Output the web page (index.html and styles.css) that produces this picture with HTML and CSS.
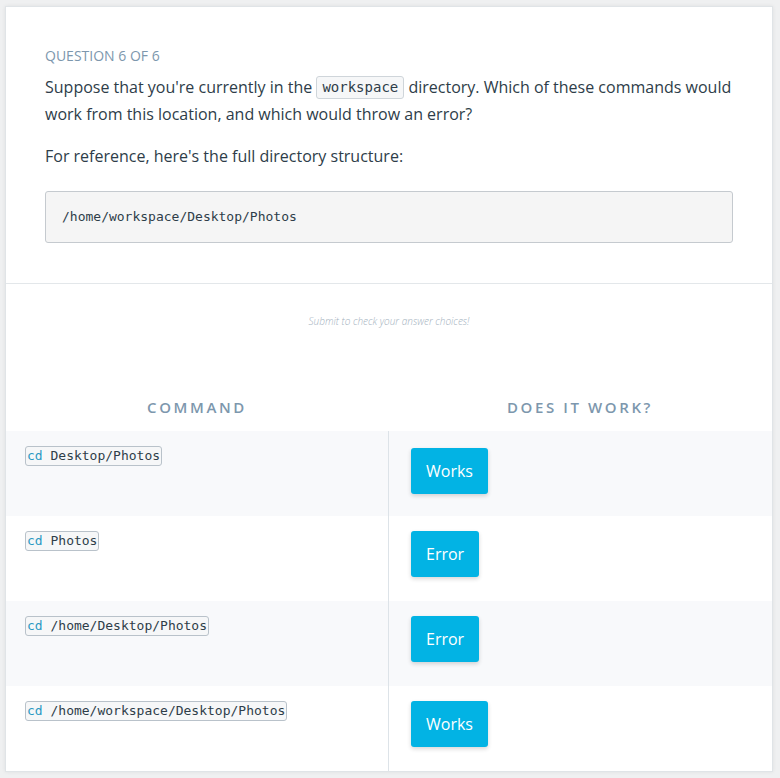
FILE: index.html
```html
<!DOCTYPE html>
<html>
<head>
<meta charset="utf-8">
<link rel="stylesheet" href="styles.css">
</head>
<body>
<div class="card">
  <section class="intro">
    <div class="label">Question 6 of 6</div>
    <p class="text">Suppose that you're currently in the <code class="inline">workspace</code> directory. Which of these commands would work from this location, and which would throw an error?</p>
    <p class="text">For reference, here's the full directory structure:</p>
    <pre class="block">/home/workspace/Desktop/Photos</pre>
  </section>
  <section class="results">
    <div class="hint">Submit to check your answer choices!</div>
    <div class="table">
      <div class="head">Command</div>
      <div class="head">Does it work?</div>

      <div class="cell cmd shade"><code class="tcode"><span class="kw">cd</span> Desktop/Photos</code></div>
      <div class="cell ans shade first"><button class="btn">Works</button></div>

      <div class="cell cmd"><code class="tcode"><span class="kw">cd</span> Photos</code></div>
      <div class="cell ans"><button class="btn">Error</button></div>

      <div class="cell cmd shade"><code class="tcode"><span class="kw">cd</span> /home/Desktop/Photos</code></div>
      <div class="cell ans shade"><button class="btn">Error</button></div>

      <div class="cell cmd"><code class="tcode"><span class="kw">cd</span> /home/workspace/Desktop/Photos</code></div>
      <div class="cell ans"><button class="btn">Works</button></div>
    </div>
  </section>
</div>
</body>
</html>
```
FILE: styles.css
```css
* { box-sizing: border-box; }
html, body { margin: 0; padding: 0; }
body {
  background: #eff0f1;
  font-family: "Open Sans", "Liberation Sans", sans-serif;
  color: #2e3d49;
  width: 780px;
  height: 778px;
  overflow: hidden;
}
.card {
  margin: 6px 0 0 5px;
  width: 768px;
  background: #fff;
  border: 1px solid #e0e4e7;
  box-shadow: 0 0 4px rgba(0, 0, 0, 0.07);
}
.intro {
  padding: 39px 39px 40px;
  border-bottom: 1px solid #e3e7ea;
}
.label {
  font-size: 14px;
  font-weight: 500;
  line-height: 20px;
  text-transform: uppercase;
  color: #7d97ad;
  margin-bottom: 8px;
}
.text {
  margin: 0 0 15px;
  font-size: 16px;
  line-height: 27px;
}
.inline {
  font-family: "DejaVu Sans Mono", monospace;
  font-size: 14px;
  line-height: 21px;
  padding: 0 5px;
  background: #f6f7f8;
  border: 1px solid #cfd5da;
  border-radius: 3px;
  display: inline-block;
  vertical-align: 1px;
}
.block {
  margin: 21px 0 0;
  font-family: "DejaVu Sans Mono", monospace;
  font-size: 13px;
  line-height: 20px;
  padding: 15px 16px;
  background: #f5f5f5;
  border: 1px solid #c5cacf;
  border-radius: 3px;
  color: #2e3d49;
}
.results {
  padding-top: 30px;
}
.hint {
  font-size: 10px;
  line-height: 14px;
  font-style: italic;
  font-weight: 300;
  color: #a2b0bd;
  text-align: center;
  margin-bottom: 67px;
}
.table {
  display: grid;
  grid-template-columns: 382px 384px;
}
.head {
  text-align: center;
  font-size: 15px;
  font-weight: 600;
  letter-spacing: 2.6px;
  text-transform: uppercase;
  color: #7d97ad;
  line-height: 24px;
  padding-bottom: 12px;
}
.cell {
  height: 85px;
  display: flex;
  align-items: flex-start;
}
.shade { background: #f8f9fb; }
.cmd {
  padding: 15px 19px;
}
.ans {
  border-left: 1px solid #dde3e8;
  padding: 15px 22px;
}
.first { padding-top: 17px; }
.tcode {
  font-family: "DejaVu Sans Mono", monospace;
  font-size: 13px;
  line-height: 18px;
  display: block;
  padding: 0 1px;
  background: #f6f7f8;
  border: 1px solid #b9c2ca;
  border-radius: 3px;
  color: #2e3d49;
}
.kw { color: #2a98c2; }
.btn {
  font-family: "Open Sans", "Liberation Sans", sans-serif;
  font-size: 16px;
  line-height: 22px;
  padding: 12px 15px;
  background: #02b3e4;
  color: #fff;
  border: 0;
  border-radius: 3px;
  box-shadow: 0 2px 4px rgba(0, 0, 0, 0.16);
}
```
